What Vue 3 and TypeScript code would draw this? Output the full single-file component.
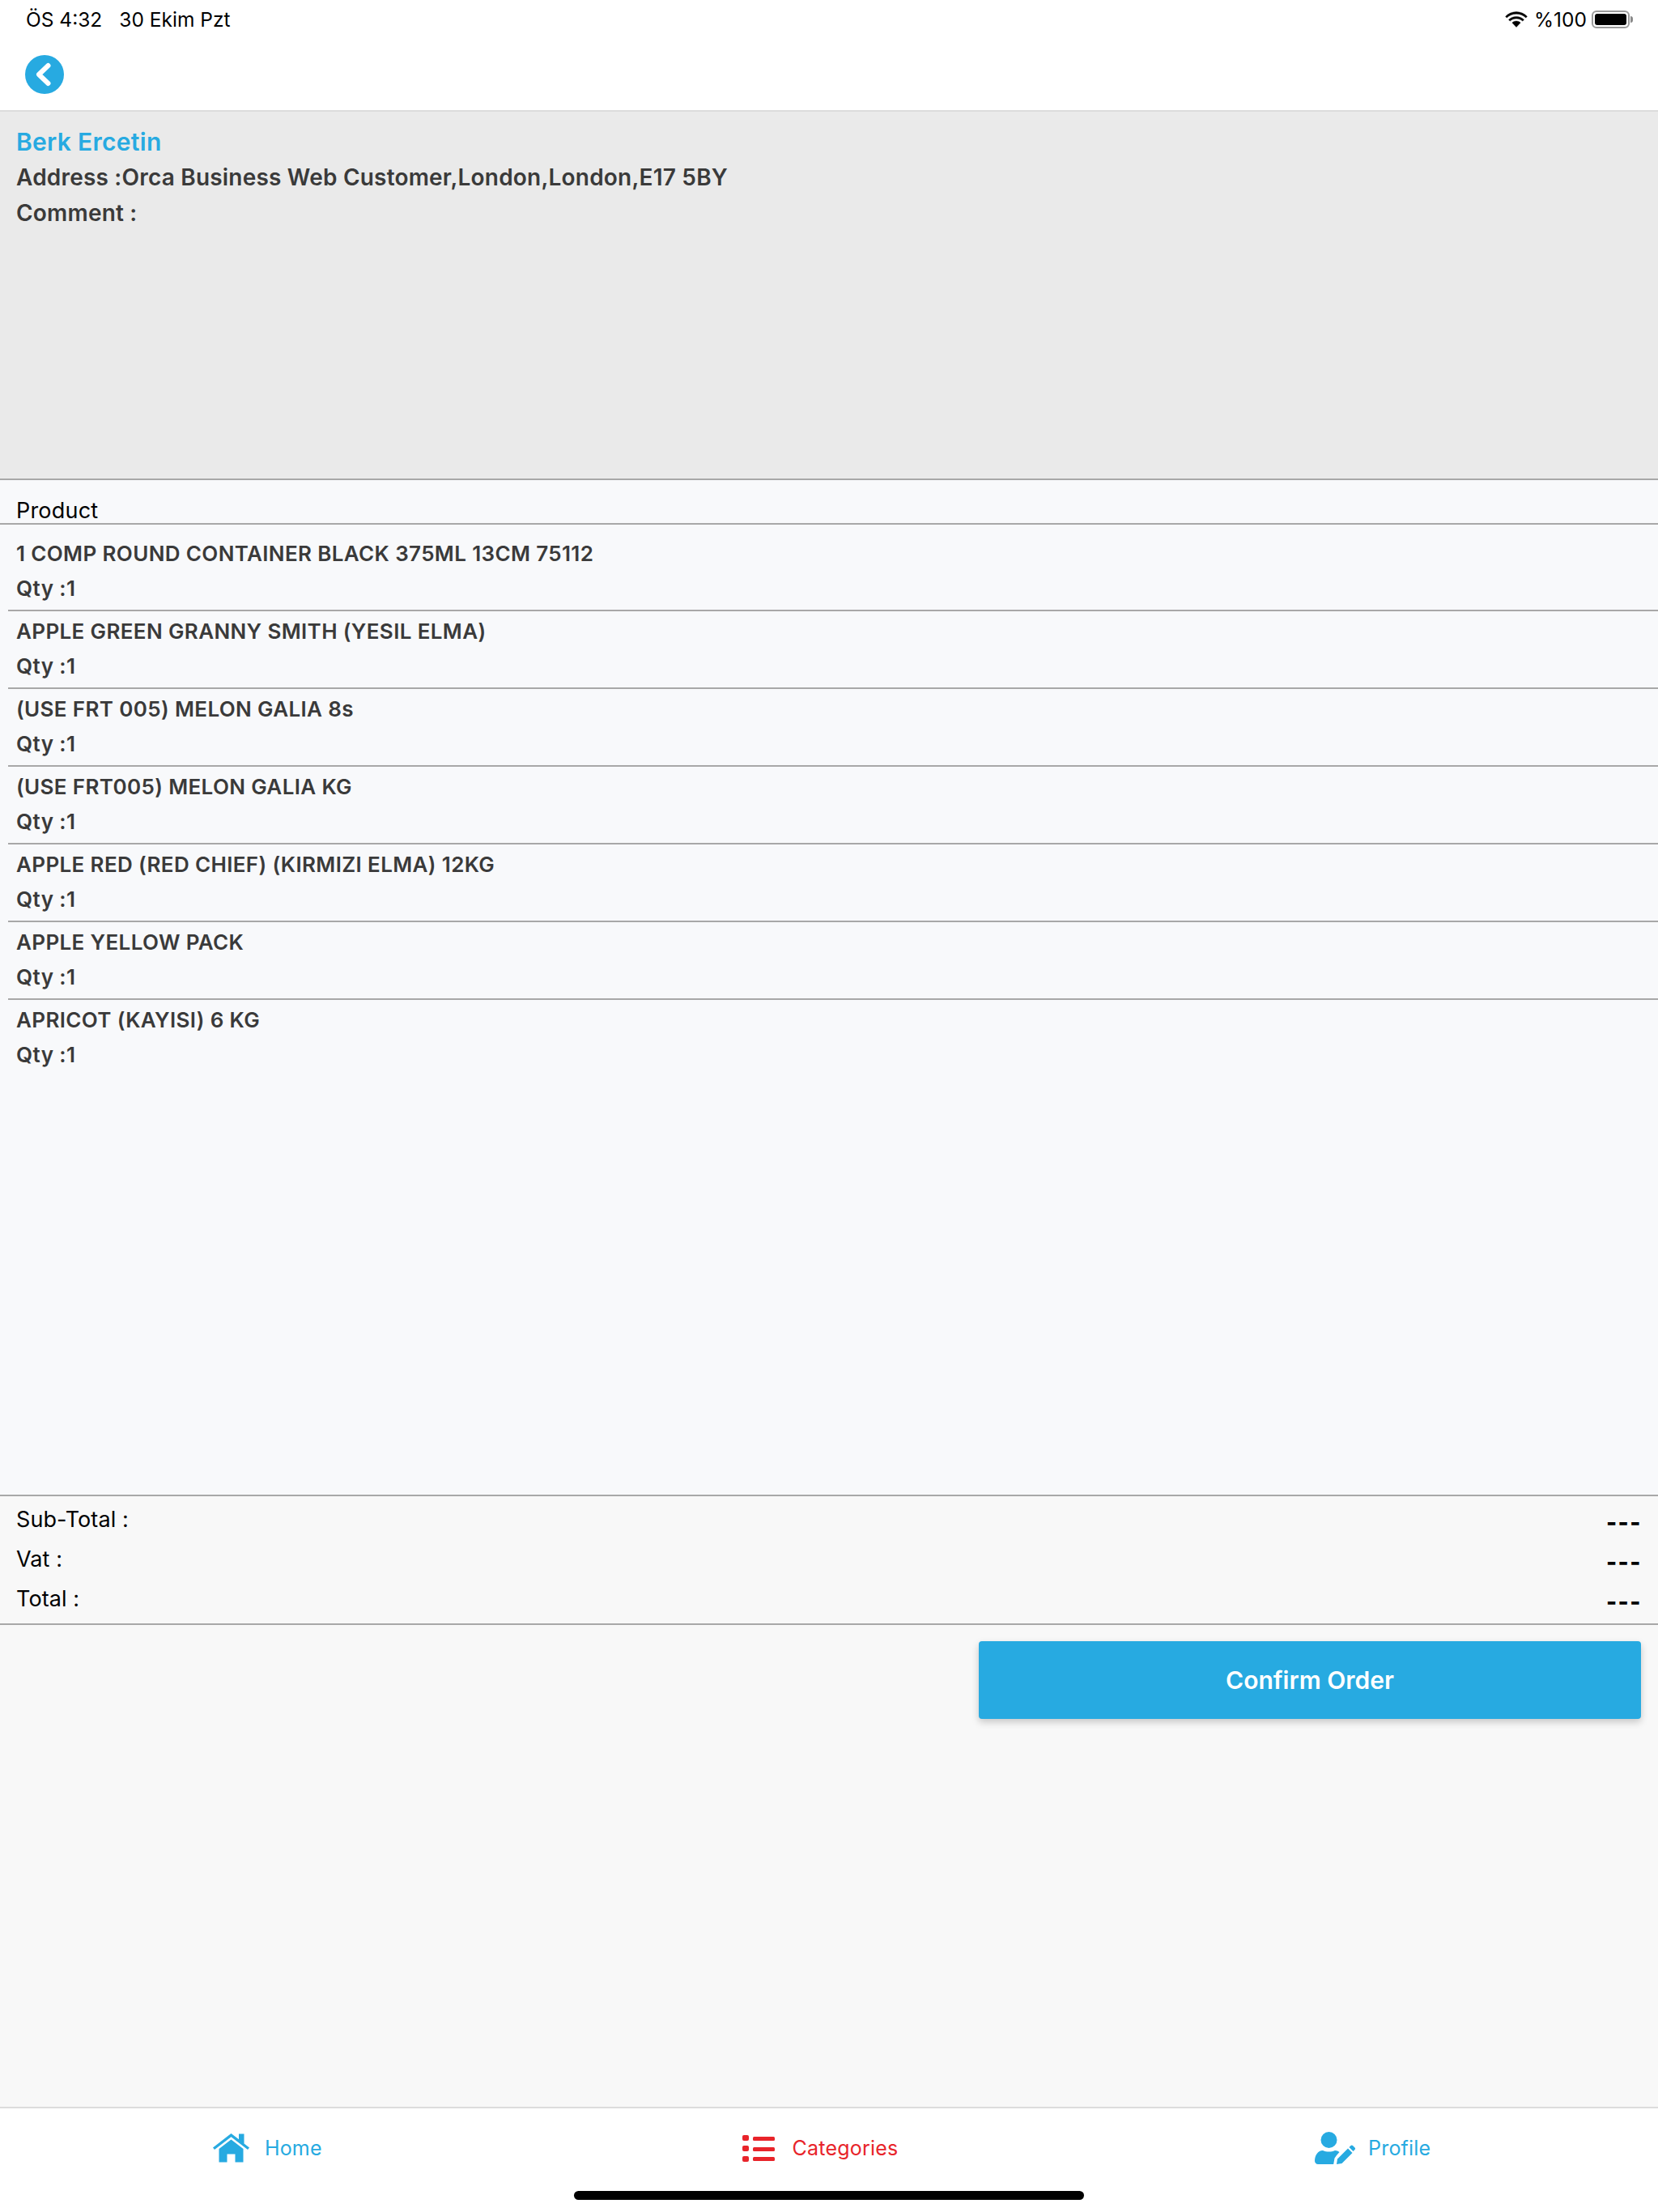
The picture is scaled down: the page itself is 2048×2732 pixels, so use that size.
<template>
  <div class="page">
    <div class="status-bar">
      <div class="status-left">
        <span>ÖS 4:32</span>
        <span>30 Ekim Pzt</span>
      </div>
      <div class="status-right">
        <svg class="wifi" viewBox="0 0 28 20" width="28" height="20">
          <path d="M14 3.2c4.6 0 8.7 1.8 11.8 4.8l1.6-1.7C23.900 2.800 19.200.6 14 .6S4.100 2.800.6 6.300L2.200 8C5.300 5 9.400 3.200 14 3.200z" />
          <path d="M14 9c3 0 5.700 1.200 7.800 3.100l1.700-1.800C21 7.900 17.700 6.400 14 6.400s-7 1.500-9.500 3.900l1.700 1.800C8.300 10.200 11 9 14 9z" />
          <path d="M14 12c-2 0-3.800.8-5.200 2l5.200 5.500 5.200-5.500c-1.400-1.200-3.200-2-5.200-2z" />
        </svg>
        <span class="percent">%100</span>
        <div class="battery"><div class="battery-fill"></div></div>
        <div class="battery-tip"></div>
      </div>
    </div>

    <div class="nav-bar">
      <button class="back-btn" aria-label="Back">
        <svg viewBox="0 0 48 48" width="48" height="48">
          <circle cx="24" cy="24" r="24" fill="#27aae1" />
          <path d="M28.500 13 17 24l11.500 11" fill="none" stroke="#fff" stroke-width="6" stroke-linecap="round" stroke-linejoin="round" />
        </svg>
      </button>
    </div>

    <div class="customer">
      <div class="customer-name">Berk Ercetin</div>
      <div class="customer-line">Address :Orca Business Web Customer,London,London,E17 5BY</div>
      <div class="customer-line">Comment :</div>
    </div>

    <div class="product-head">Product</div>

    <div class="product-list">
      <div v-for="item in products" :key="item" class="product-row">
        <div class="product-name">{{ item }}</div>
        <div class="product-qty">Qty :1</div>
      </div>
    </div>

    <div class="totals">
      <div v-for="label in totals" :key="label" class="total-row">
        <span>{{ label }} :</span>
        <span class="total-value">---</span>
      </div>
    </div>

    <div class="actions">
      <button class="confirm-btn">Confirm Order</button>
    </div>

    <div class="tab-bar">
      <div class="tab tab-home">
        <svg viewBox="0 0 45 36" width="45" height="36" fill="#27aae1">
          <path d="M22.500 0 32 7.300V.4h6.500v12l6.500 5-2 2.500L22.500 4.300 2 19.900 0 17.400z" />
          <path d="M22.500 7.500 7.500 19v16.500h10V25.500h10v10h10V19z" />
        </svg>
        <span>Home</span>
      </div>
      <div class="tab tab-active">
        <svg viewBox="0 0 40 33" width="40" height="33" fill="#e8242a">
          <rect x="0" y="0" width="8" height="7" rx="2" />
          <rect x="0" y="13" width="8" height="7" rx="2" />
          <rect x="0" y="26" width="8" height="7" rx="2" />
          <rect x="13" y="2" width="27" height="5" rx="1.500" />
          <rect x="13" y="15" width="27" height="5" rx="1.500" />
          <rect x="13" y="27" width="27" height="5" rx="1.500" />
        </svg>
        <span>Categories</span>
      </div>
      <div class="tab tab-profile">
        <svg viewBox="0 0 50 40" width="50" height="40" fill="#27aae1">
          <circle cx="17.500" cy="10" r="10" />
          <path d="M0 36c0-7 4-13 10-13 2.500 1 4.800 1.500 7.500 1.500S22.500 24 25 23c2 0 4 .8 5.500 2L27 29l-2.500 3.500-1.300 7.500H4c-2.200 0-4-1.800-4-4z" />
          <path d="M27 40l1-6.500L41 20.500l5.500 5.500L33.500 39z" />
          <path d="M42.500 19l2-2c.8-.8 1.800-.8 2.500 0l2.500 2.500c.8.800.8 1.800 0 2.500l-2 2z" />
        </svg>
        <span>Profile</span>
      </div>
    </div>

    <div class="home-indicator"></div>
  </div>
</template>

<script setup lang="ts">
const products: string[] = [
  '1 COMP ROUND CONTAINER BLACK 375ML 13CM 75112',
  'APPLE GREEN GRANNY SMITH (YESIL ELMA)',
  '(USE FRT 005) MELON GALIA 8s',
  '(USE FRT005) MELON GALIA KG',
  'APPLE RED (RED CHIEF) (KIRMIZI ELMA) 12KG',
  'APPLE YELLOW PACK',
  'APRICOT (KAYISI) 6 KG'
]

const totals: string[] = ['Sub-Total', 'Vat', 'Total']
</script>

<style>
html, body {
  margin: 0;
  background: #fff;
}
</style>

<style scoped>
.page {
  position: relative;
  display: flex;
  flex-direction: column;
  width: 2048px;
  height: 2732px;
  overflow: hidden;
  background: #f8f8f8;
  font-family: Inter, "Liberation Sans", sans-serif;
  color: #000;
}
.status-bar {
  display: flex;
  justify-content: space-between;
  align-items: center;
  height: 48px;
  padding: 0 31px 0 32px;
  background: #fff;
  font-size: 24.500px;
}
.status-left {
  display: flex;
  gap: 21px;
}
.status-right {
  display: flex;
  align-items: center;
}
.wifi {
  fill: #000;
  stroke: #000;
  stroke-width: 0.4;
  margin-right: 8px;
}
.percent {
  margin-right: 6px;
}
.battery {
  width: 47px;
  height: 22px;
  box-sizing: border-box;
  border: 2px solid #9a9a9a;
  border-radius: 6px;
  padding: 2px;
}
.battery-fill {
  height: 100%;
  background: #000;
  border-radius: 3px;
}
.battery-tip {
  width: 3px;
  height: 8px;
  margin-left: 1px;
  background: #8a8a8a;
  border-radius: 0 3px 3px 0;
}
.nav-bar {
  height: 90px;
  box-sizing: border-box;
  padding: 20px 31px 0;
  background: #fff;
  border-bottom: 2px solid #dcdcdc;
  flex: none;
}
.back-btn {
  display: block;
  padding: 0;
  border: none;
  background: transparent;
}
.customer {
  flex: none;
  height: 455px;
  box-sizing: border-box;
  padding: 15px 20px 0;
  background: #eaeaea;
  border-bottom: 2px solid #a8a8a8;
}
.customer-name {
  height: 44px;
  line-height: 44px;
  font-size: 30px;
  font-weight: 600;
  letter-spacing: 0.3px;
  color: #27aae1;
}
.customer-line {
  height: 44px;
  line-height: 44px;
  font-size: 28px;
  font-weight: 600;
  letter-spacing: 0.2px;
  color: #3a3a3a;
}
.product-head {
  flex: none;
  height: 55px;
  box-sizing: border-box;
  padding: 20px 20px 0;
  line-height: 36px;
  font-size: 27px;
  letter-spacing: 0.2px;
  background: #f8f9fb;
  border-bottom: 2px solid #a8a8a8;
}
.product-list {
  flex: none;
  height: 1200px;
  box-sizing: border-box;
  padding: 11px 0 0 20px;
  background: #f8f9fb;
  border-bottom: 2px solid #a8a8a8;
}
.product-row {
  height: 96px;
  box-sizing: border-box;
  margin-left: -10px;
  padding-left: 10px;
  border-bottom: 2px solid #a8a8a8;
  font-weight: 600;
  color: #3a3a3a;
}
.product-row:last-child {
  border-bottom: none;
}
.product-name {
  height: 50px;
  line-height: 50px;
  font-size: 26px;
  letter-spacing: 0.36px;
}
.product-qty {
  line-height: 35px;
  font-size: 26px;
  letter-spacing: 0.4px;
}
.totals {
  flex: none;
  height: 159px;
  box-sizing: border-box;
  padding: 7px 20px 0;
  border-bottom: 2px solid #a8a8a8;
}
.total-row {
  display: flex;
  justify-content: space-between;
  height: 49px;
  line-height: 44px;
  font-size: 27px;
  letter-spacing: 0.1px;
}
.total-value {
  font-size: 28px;
  font-weight: 800;
  letter-spacing: 1.500px;
  line-height: 50px;
}
.actions {
  flex: 1;
  display: flex;
  justify-content: flex-end;
  padding: 20px 21px 0 0;
}
.confirm-btn {
  width: 818px;
  height: 96px;
  border: none;
  border-radius: 4px;
  background: #27aae1;
  color: #fff;
  font-family: inherit;
  font-size: 30px;
  font-weight: 600;
  box-shadow: 0 4px 10px rgba(0, 0, 0, 0.2);
}
.tab-bar {
  flex: none;
  display: grid;
  grid-template-columns: repeat(3, 1fr);
  height: 130px;
  box-sizing: border-box;
  padding-bottom: 30px;
  background: #fff;
  border-top: 2px solid #dcdcdc;
}
.tab {
  display: flex;
  align-items: center;
  justify-content: center;
  gap: 22px;
  padding-right: 22px;
  font-size: 25px;
  letter-spacing: 0.2px;
  color: #27aae1;
}
.tab-home {
  gap: 19px;
}
.tab-profile {
  gap: 16px;
}
.tab-active {
  color: #e8242a;
}
.home-indicator {
  position: absolute;
  left: 709px;
  bottom: 15px;
  width: 630px;
  height: 11px;
  border-radius: 6px;
  background: #000;
}
</style>
